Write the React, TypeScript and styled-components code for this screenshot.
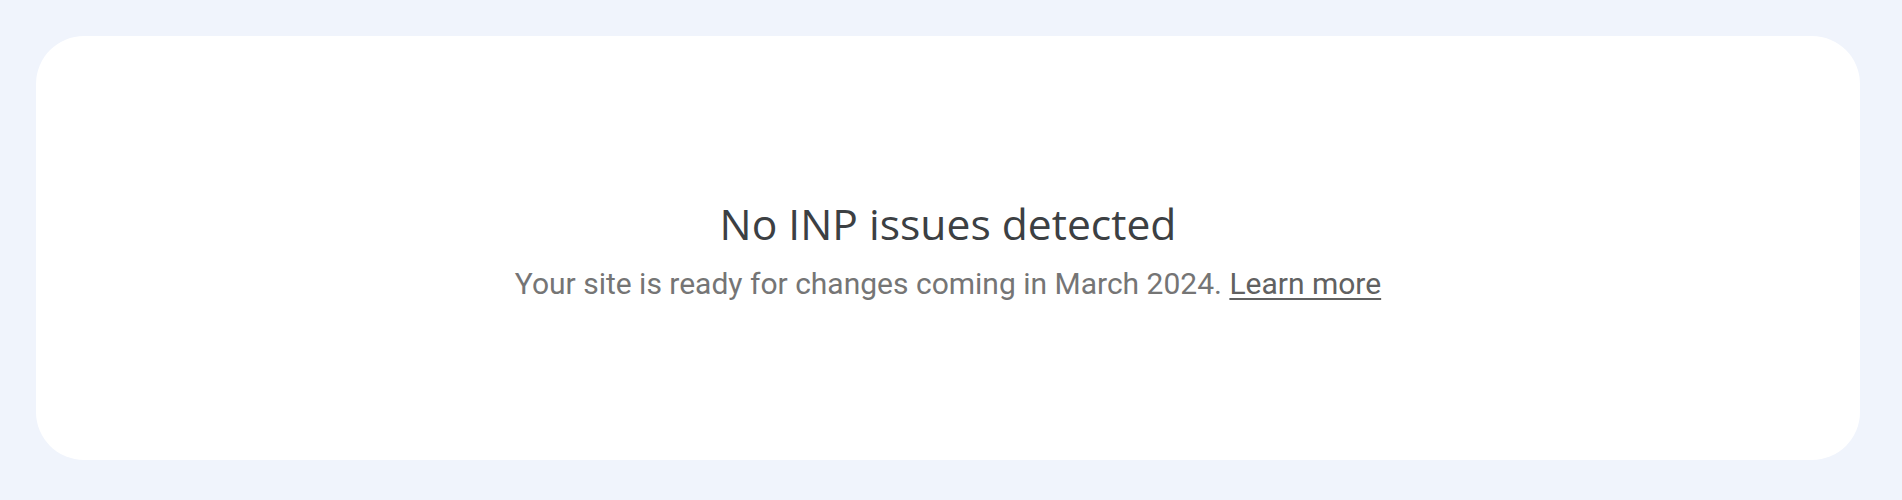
import React from "react";
import styled, { createGlobalStyle } from "styled-components";

const Global = createGlobalStyle`
  html, body { margin: 0; padding: 0; background: #f0f4fc; }
  body { font-family: Roboto, "Noto Sans", sans-serif; }
`;

const Page = styled.div`
  box-sizing: border-box;
  width: 100%;
  height: 500px;
  padding: 36px 42px 40px 36px;
  background: #f0f4fc;
`;

const Card = styled.section`
  box-sizing: border-box;
  height: 424px;
  background: #ffffff;
  border-radius: 48px;
  display: flex;
  flex-direction: column;
  align-items: center;
  justify-content: center;
  padding-top: 3px;
`;

const Title = styled.h2`
  margin: 0;
  font-family: "Open Sans", sans-serif;
  font-weight: 400;
  font-size: 42.6px;
  line-height: 52px;
  color: #3c4043;
`;

const Subtitle = styled.p`
  margin: 17px 0 0;
  font-family: Roboto, sans-serif;
  font-size: 30px;
  line-height: 36px;
  color: #757575;
`;

const Link = styled.a`
  color: #616161;
  text-decoration: underline;
  text-underline-offset: 4px;
  text-decoration-thickness: 2px;
  cursor: pointer;
`;

export default function App() {
  return (
    <>
      <Global />
      <Page>
        <Card>
          <Title>No INP issues detected</Title>
          <Subtitle>
            Your site is ready for changes coming in March 2024. <Link>Learn more</Link>
          </Subtitle>
        </Card>
      </Page>
    </>
  );
}
